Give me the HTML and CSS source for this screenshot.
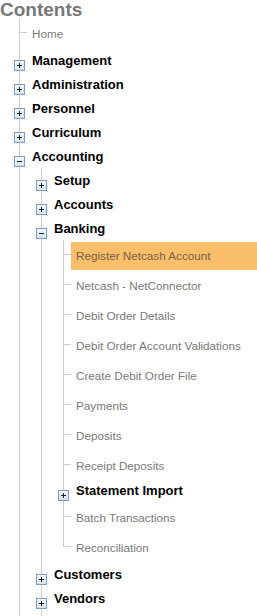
FILE: index.html
```html
<!DOCTYPE html>
<html lang="en">
<head>
  <meta charset="UTF-8">
  <title>Contents</title>
  <link rel="stylesheet" href="styles.css">
</head>
<body>
  <h1 class="contents-title">Contents</h1>

  <ul class="tree tree-root">
    <li class="node leaf"><span class="label">Home</span></li>
    <li class="node folder"><span class="toggle plus"></span><span class="label">Management</span></li>
    <li class="node folder"><span class="toggle plus"></span><span class="label">Administration</span></li>
    <li class="node folder"><span class="toggle plus"></span><span class="label">Personnel</span></li>
    <li class="node folder"><span class="toggle plus"></span><span class="label">Curriculum</span></li>
    <li class="node folder">
      <span class="toggle minus"></span><span class="label">Accounting</span>
      <ul class="tree tree-open">
        <li class="node folder"><span class="toggle plus"></span><span class="label">Setup</span></li>
        <li class="node folder"><span class="toggle plus"></span><span class="label">Accounts</span></li>
        <li class="node folder">
          <span class="toggle minus"></span><span class="label">Banking</span>
          <ul class="tree">
            <li class="node leaf"><span class="label selected">Register Netcash Account</span></li>
            <li class="node leaf"><span class="label">Netcash - NetConnector</span></li>
            <li class="node leaf"><span class="label">Debit Order Details</span></li>
            <li class="node leaf"><span class="label">Debit Order Account Validations</span></li>
            <li class="node leaf"><span class="label">Create Debit Order File</span></li>
            <li class="node leaf"><span class="label">Payments</span></li>
            <li class="node leaf"><span class="label">Deposits</span></li>
            <li class="node leaf"><span class="label">Receipt Deposits</span></li>
            <li class="node folder inner"><span class="toggle plus"></span><span class="label">Statement Import</span></li>
            <li class="node leaf"><span class="label">Batch Transactions</span></li>
            <li class="node leaf last"><span class="label">Reconciliation</span></li>
          </ul>
        </li>
        <li class="node folder"><span class="toggle plus"></span><span class="label">Customers</span></li>
        <li class="node folder"><span class="toggle plus"></span><span class="label">Vendors</span></li>
      </ul>
    </li>
  </ul>
</body>
</html>
```

FILE: styles.css
```css
body {
  margin: 0;
  background: #fff;
  font-family: 'Liberation Sans', Arial, sans-serif;
  overflow: hidden;
}
.contents-title {
  margin: 0;
  height: 18px;
  font-size: 19px;
  line-height: 20px;
  font-weight: bold;
  color: #787878;
}
.tree {
  list-style: none;
  margin: 0 0 0 21px;
  padding: 0;
  border-left: 1px solid #c7ced8;
}
.tree-root {
  margin-left: 19px;
  padding-bottom: 20px;
}
.tree-open {
  padding-bottom: 10px;
}
.node {
  position: relative;
}
.folder > .label {
  display: block;
  height: 22px;
  padding: 2px 0 0 12px;
  line-height: 22px;
  font-size: 13px;
  font-weight: bold;
  color: #000;
  white-space: nowrap;
}
.folder.inner {
  margin-top: -2px;
}
.toggle {
  position: absolute;
  left: -6px;
  top: 12px;
  width: 9px;
  height: 9px;
  border: 1px solid #7b9dc4;
  background: linear-gradient(#f5f8fc, #d5e2f1);
  z-index: 1;
}
.toggle::before {
  content: "";
  position: absolute;
  left: 2px;
  top: 4px;
  width: 5px;
  height: 1px;
  background: #1c1c1c;
}
.toggle.plus::after {
  content: "";
  position: absolute;
  left: 4px;
  top: 2px;
  width: 1px;
  height: 5px;
  background: #1c1c1c;
}
.leaf {
  padding-top: 2px;
}
.leaf::before {
  content: "";
  position: absolute;
  left: 0;
  top: 14px;
  width: 7px;
  height: 1px;
  background: #c7ced8;
}
.leaf.last::after {
  content: "";
  position: absolute;
  left: -1px;
  top: 15px;
  bottom: 0;
  width: 1px;
  background: #fff;
}
.leaf > .label {
  display: block;
  height: 28px;
  margin-left: 7px;
  padding: 0 5px;
  line-height: 28px;
  font-size: 11.7px;
  color: #7a7a7a;
  white-space: nowrap;
}
.leaf > .label.selected {
  background: #fbbf6b;
  color: #786246;
}
```
